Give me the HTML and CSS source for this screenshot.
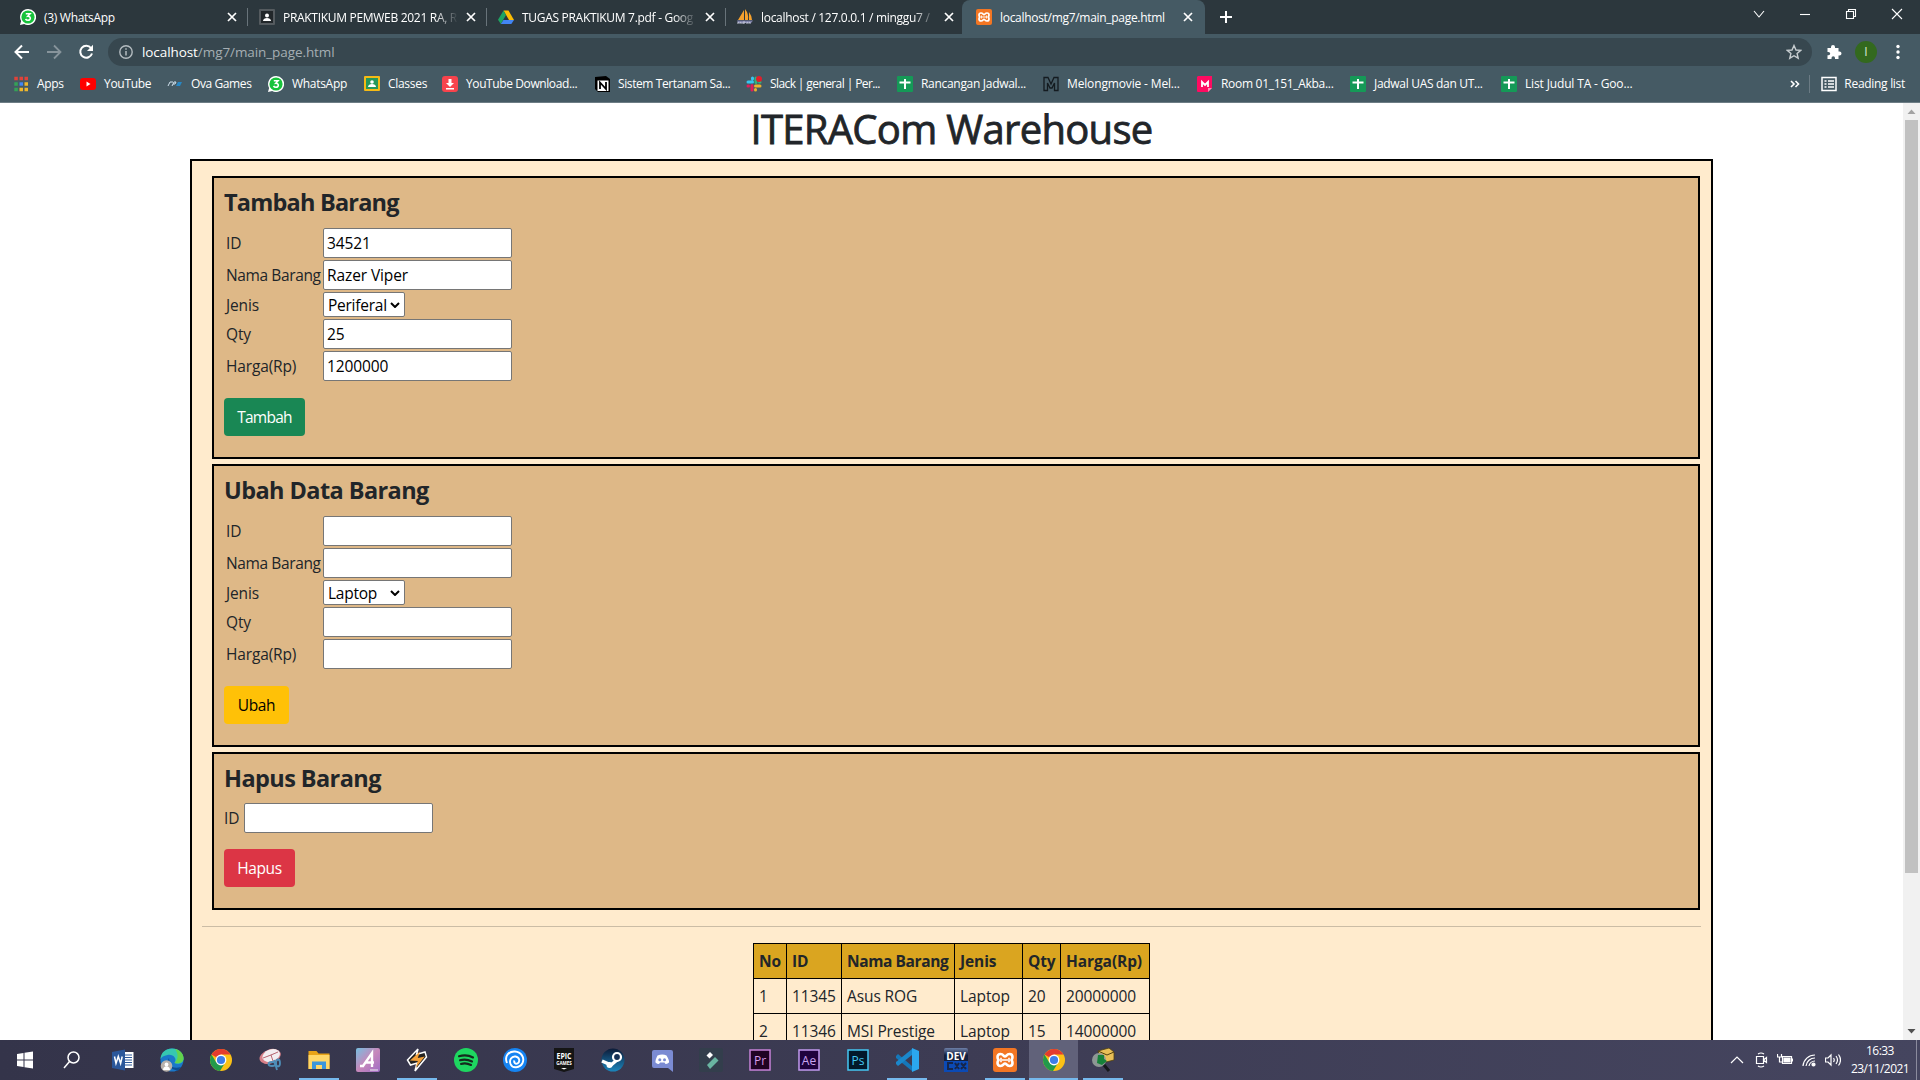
FILE: index.html
```html
<!DOCTYPE html>
<html lang="id">
<head>
<meta charset="utf-8">
<title>ITERACom Warehouse</title>
<link rel="stylesheet" href="styles.css">
</head>
<body>
<svg class="defs" width="0" height="0" aria-hidden="true">
  <symbol id="close" viewBox="0 0 10 10"><path d="M1 1l8 8M9 1l-8 8" stroke="#fff" stroke-width="1.7" fill="none"/></symbol>
  <symbol id="wa" viewBox="0 0 16 16"><path d="M8 0a8 8 0 1 1-3.800 15L0 16l1.100-4A8 8 0 0 1 8 0z" fill="#fff"/><circle cx="8" cy="8" r="6.600" fill="#18c33c"/><path d="M5.800 4.800h4.200L7.800 7.300c3.300-.300 3.300 4 .200 4-1.200 0-2-.500-2.500-1.300" fill="none" stroke="#fff" stroke-width="1.600"/></symbol>
  <symbol id="xampp" viewBox="0 0 24 24"><rect width="24" height="24" rx="3" fill="#f37623"/><path d="M7.500 6c3 0 3 2.500 4.500 2.500S13.500 6 16.500 6c2 0 3 1.500 3 3s-1 3-1 3 1 1.500 1 3-1 3-3 3c-3 0-3-2.500-4.500-2.500S10.500 18 7.500 18c-2 0-3-1.500-3-3s1-3 1-3-1-1.500-1-3 1-3 3-3z" fill="none" stroke="#fff" stroke-width="2.600"/><path d="M8 9.800v4.400M16 9.800v4.400M9 12h6" stroke="#fff" stroke-width="1.600"/></symbol>
  <symbol id="sheet" viewBox="0 0 16 16"><rect width="16" height="16" rx="1" fill="#159957"/><path d="M2.500 6.500h11M8 3v10" stroke="#fff" stroke-width="2"/></symbol>
  <symbol id="chrome" viewBox="0 0 24 24"><circle cx="12" cy="12" r="11" fill="#fbc116"/><path d="M12 12L2.500 6.500A11 11 0 0 1 21.500 6.500H12z" fill="#e33b2e"/><path d="M2.500 6.500A11 11 0 0 0 11 23l5.500-9L12 12 7 14z" fill="#229a4b"/><circle cx="12" cy="12" r="5.400" fill="#fff"/><circle cx="12" cy="12" r="4.100" fill="#3d7de8"/></symbol>
</svg>

<header class="tabs">
  <div class="tab"><svg class="fav" viewBox="0 0 16 16"><use href="#wa"/></svg><span class="tab-title">(3) WhatsApp</span><svg class="x"><use href="#close"/></svg></div>
  <div class="tab"><svg class="fav" viewBox="0 0 16 16"><rect width="16" height="16" rx="1" fill="#555b5f"/><rect x="2" y="2" width="12" height="12" fill="#22272a"/><circle cx="8" cy="6.500" r="2" fill="#fff"/><path d="M4 12c0-4 8-4 8 0z" fill="#fff"/></svg><span class="tab-title fade">PRAKTIKUM PEMWEB 2021 RA, R</span><svg class="x"><use href="#close"/></svg></div>
  <div class="tab"><svg class="fav" viewBox="0 0 16 16"><path d="M5.500 1.500h5L16 11h-5z" fill="#fbbc04"/><path d="M5.500 1.500L8 6 2.800 15 0 10.800z" fill="#1ea362"/><path d="M5.400 11H16l-2.700 4H2.800z" fill="#4285f4"/></svg><span class="tab-title fade">TUGAS PRAKTIKUM 7.pdf - Goog</span><svg class="x"><use href="#close"/></svg></div>
  <div class="tab"><svg class="fav" viewBox="0 0 16 16"><path d="M7 1L1 11h6zM8 0q4 5 3 11H8zM12 3q3 4 3 8h-3z" fill="#f6a12d"/><path d="M0 11.500h16L14 14H1z" fill="#7d80a8"/><path d="M1 15v-2l1.500 1L4 13v2m2 0v-2h2v1H6m4 1v-2l1.500 1 1.500-1v2" stroke="#bfc2d6" fill="none"/></svg><span class="tab-title fade">localhost / 127.0.0.1 / minggu7 /</span><svg class="x"><use href="#close"/></svg></div>
  <div class="tab active"><svg class="fav" viewBox="0 0 24 24"><use href="#xampp"/></svg><span class="tab-title">localhost/mg7/main_page.html</span><svg class="x"><use href="#close"/></svg></div>
  <svg class="plus" viewBox="0 0 12 12"><path d="M6 0v12M0 6h12" stroke="#fff" stroke-width="2"/></svg>
  <div class="window-controls">
    <svg viewBox="0 0 12 12"><path d="M1 3l5 6 5-6" /></svg>
    <svg viewBox="0 0 12 12"><path d="M1 6.500h10"/></svg>
    <svg viewBox="0 0 12 12"><path d="M1.500 3.500h7v7h-7zM3.500 3.500v-2h7v7h-2"/></svg>
    <svg viewBox="0 0 12 12"><path d="M1 1l10 10M11 1L1 11"/></svg>
  </div>
</header>

<nav class="toolbar">
  <svg class="nav" viewBox="0 0 16 16"><path d="M15 8H2M8 1.500L1.500 8 8 14.500" stroke="#fff" stroke-width="2" fill="none"/></svg>
  <svg class="nav" viewBox="0 0 16 16"><path d="M1 8h13M8 1.500L14.500 8 8 14.500" stroke="#87949b" stroke-width="1.800" fill="none"/></svg>
  <svg class="nav" viewBox="0 0 16 16"><path d="M13 4A6 6 0 1 0 14 9.500" stroke="#fff" stroke-width="2" fill="none"/><path d="M15 .800V7H9z" fill="#fff"/></svg>
  <div class="address">
    <svg width="14" height="14" viewBox="0 0 14 14"><circle cx="7" cy="7" r="6.200" stroke="#b4bcc0" stroke-width="1.400" fill="none"/><path d="M7 6v4.500M7 3.300v1.500" stroke="#b4bcc0" stroke-width="1.500"/></svg>
    <span class="url"><b>localhost</b>/mg7/main_page.html</span>
    <svg width="16" height="16" viewBox="0 0 16 16"><path d="M8 1.500l2 4.500 4.700.400-3.600 3.100 1.100 4.700L8 11.700l-4.200 2.500 1.100-4.700L1.300 6.400 6 6z" stroke="#c6cccf" stroke-width="1.400" fill="none"/></svg>
  </div>
  <svg class="ext" viewBox="0 0 16 16"><path d="M1.500 4H5V3a2 2 0 0 1 4 0v1h3.500v3.500h1a2 2 0 0 1 0 4h-1V15H9v-1a1.700 1.700 0 0 0-3.500 0v1h-4v-3.700h1a1.700 1.700 0 0 0 0-3.400h-1z" fill="#fff"/></svg>
  <div class="avatar">I</div>
  <svg class="dots" viewBox="0 0 4 16"><circle cx="2" cy="2.500" r="1.700"/><circle cx="2" cy="8" r="1.700"/><circle cx="2" cy="13.500" r="1.700"/></svg>
</nav>

<div class="bookmarks">
  <div class="bm w67"><svg viewBox="0 0 16 16"><path d="M1.300 2.500h3.500M6.500 2.500H10M11.500 2.500H15" stroke="#e0433a" stroke-width="3.400"/><path d="M1.300 8h3.500M1.300 13.500h3.500" stroke="#35a257" stroke-width="3.400"/><path d="M6.500 8H10" stroke="#4286f5" stroke-width="3.400"/><path d="M11.500 8H15M6.500 13.500H10M11.500 13.500H15" stroke="#eeb72c" stroke-width="3.400"/></svg><span>Apps</span></div>
  <div class="bm w87"><svg viewBox="0 0 16 16"><rect y="2" width="16" height="12" rx="3" fill="#f00"/><path d="M6.500 5.500v5l4-2.500z" fill="#fff"/></svg><span>YouTube</span></div>
  <div class="bm w101"><svg viewBox="0 0 16 16"><path d="M1 10l2-4h3M5 10l2-4h2l-1 2H6" stroke="#cfe0ec" fill="none"/><path d="M9 10l2-4h4l-2 4z" fill="#2787c4"/></svg><span class="tight">Ova Games</span></div>
  <div class="bm w96"><svg viewBox="0 0 16 16"><use href="#wa"/></svg><span>WhatsApp</span></div>
  <div class="bm w78"><svg viewBox="0 0 16 16"><rect width="16" height="15" rx="1" fill="#f5ba15"/><rect x="2" y="2" width="12" height="11" fill="#26985a"/><circle cx="8" cy="6" r="1.800" fill="#fff"/><path d="M4 11c0-4 8-4 8 0z" fill="#fff"/></svg><span>Classes</span></div>
  <div class="bm w152"><svg viewBox="0 0 16 16"><rect width="16" height="16" rx="3" fill="#f7434c"/><path d="M6.500 3h3v4H12l-4 4-4-4h2.500zM4 12h8v1.500H4z" fill="#fff"/></svg><span class="tight">YouTube Download...</span></div>
  <div class="bm w152"><svg viewBox="0 0 16 16"><path d="M1 1l11-1 4 3v13H4l-3-3z" fill="#000"/><path d="M3.500 4.500H14.500V15H3.500z" fill="#fff"/><path d="M6 13V6.500l6 6.500V6" stroke="#000" stroke-width="1.800" fill="none"/></svg><span class="tight">Sistem Tertanam Sa...</span></div>
  <div class="bm w151"><svg viewBox="0 0 16 16"><g stroke-width="3" stroke-linecap="round"><path d="M2 6h4.500M6.500 2v1" stroke="#36c5f0"/><path d="M10 2v4.500M14 6h-.500" stroke="#2eb67d"/><path d="M14 10H9.500M9.500 14v-.500" stroke="#ecb22e"/><path d="M6 14V9.500M2 10h.500" stroke="#e01e5a"/></g><circle cx="13" cy="3" r="3" fill="#e01f2d"/></svg><span class="tighter">Slack | general | Per...</span></div>
  <div class="bm w146"><svg viewBox="0 0 16 16"><use href="#sheet"/></svg><span>Rancangan Jadwal...</span></div>
  <div class="bm w154"><svg viewBox="0 0 16 16"><path d="M1 1.500h4L8 8l3-6.500h4v13h-3.500V7L9 12H7L4.500 7v7.500H1z" fill="none" stroke="#141b20" stroke-width="1.300"/></svg><span class="loose">Melongmovie - Mel...</span></div>
  <div class="bm w153"><svg viewBox="0 0 16 16"><path d="M1 0h14v12l-4 4H1a1 1 0 0 1-1-1V1z" fill="#ff0b61"/><path d="M5 11V6l3 3 3-3v5" stroke="#fff" stroke-width="1.800" fill="none"/><path d="M11 16v-4h4z" fill="#ff8cb4"/></svg><span>Room 01_151_Akba...</span></div>
  <div class="bm w151"><svg viewBox="0 0 16 16"><use href="#sheet"/></svg><span>Jadwal UAS dan UT...</span></div>
  <div class="bm"><svg viewBox="0 0 16 16"><use href="#sheet"/></svg><span class="loose">List Judul TA - Goo...</span></div>
  <svg class="more" viewBox="0 0 10 8"><path d="M1 1l3 3-3 3M5.500 1l3 3-3 3" stroke="#fff" stroke-width="1.600" fill="none"/></svg>
  <div class="reading"><svg viewBox="0 0 16 16"><path d="M1 1.500h14v13H1zM3.500 5h2M7 5h6M3.500 8h2M7 8h6M3.500 11h2M7 11h6" stroke="#fff" stroke-width="1.500" fill="none"/></svg><span>Reading list</span></div>
</div>

<div class="viewport">
  <main class="page">
    <h1>ITERACom Warehouse</h1>
    <div class="container">
      <section class="box">
        <h4>Tambah Barang</h4>
        <div class="form">
          <label>ID</label><input value="34521">
          <label class="long">Nama Barang</label><input value="Razer Viper">
          <label>Jenis</label><div class="select">Periferal<svg viewBox="0 0 10 6"><path d="M1 1l4 4 4-4"/></svg></div>
          <label>Qty</label><input value="25">
          <label>Harga(Rp)</label><input value="1200000">
        </div>
        <button class="btn green">Tambah</button>
      </section>
      <section class="box">
        <h4 class="wide">Ubah Data Barang</h4>
        <div class="form">
          <label>ID</label><input>
          <label class="long">Nama Barang</label><input>
          <label>Jenis</label><div class="select">Laptop<svg viewBox="0 0 10 6"><path d="M1 1l4 4 4-4"/></svg></div>
          <label>Qty</label><input>
          <label>Harga(Rp)</label><input>
        </div>
        <button class="btn yellow">Ubah</button>
      </section>
      <section class="box short">
        <h4 class="wide">Hapus Barang</h4>
        <div class="inline"><label>ID</label><input></div>
        <button class="btn red">Hapus</button>
      </section>
      <hr>
      <table>
        <colgroup><col class="c1"><col class="c2"><col class="c3"><col class="c4"><col class="c5"><col class="c6"></colgroup>
        <tr><th>No</th><th>ID</th><th>Nama Barang</th><th>Jenis</th><th>Qty</th><th>Harga(Rp)</th></tr>
        <tr><td>1</td><td>11345</td><td>Asus ROG</td><td>Laptop</td><td>20</td><td>20000000</td></tr>
        <tr><td>2</td><td>11346</td><td>MSI Prestige</td><td>Laptop</td><td>15</td><td>14000000</td></tr>
      </table>
    </div>
  </main>
  <div class="scrollbar">
    <svg viewBox="0 0 17 17"><path d="M4.500 11l4-4.500 4 4.500z" fill="#a3a3a3"/></svg>
    <div class="thumb"></div>
    <svg class="down" viewBox="0 0 17 17"><path d="M4.500 6l4 4.500 4-4.500z" fill="#505050"/></svg>
  </div>
</div>

<footer class="taskbar">
  <div class="app"><svg viewBox="0 0 24 24"><path d="M4 6l6.500-1v6.500H4zM11.500 4.800L20 3.600v7.900h-8.500zM4 12.500h6.500V19L4 18zM11.500 12.500H20v7.900l-8.500-1.200z" fill="#fff"/></svg></div>
  <div class="app search"><svg viewBox="0 0 24 24"><circle cx="13.500" cy="9.500" r="5.500" fill="none" stroke="#fff" stroke-width="1.500"/><path d="M9.500 13.500L4 20" stroke="#fff" stroke-width="1.500"/></svg></div>
  <div class="app"><svg viewBox="0 0 24 24"><path d="M12 4h10.500v16H12z" fill="#fff"/><path d="M14 7h7m-7 2.500h7M14 12h7m-7 2.500h7M14 17h7" stroke="#2b579a"/><path d="M1 4l13-2.500v21L1 20z" fill="#2b579a"/><path d="M3.500 8.500l1.500 7 2.300-7 2.300 7 1.600-7" stroke="#fff" stroke-width="1.500" fill="none"/></svg></div>
  <div class="app"><svg viewBox="0 0 24 24"><circle cx="12" cy="12" r="11.500" fill="#1a77c9"/><path d="M.500 11C1 4 6 .500 12 .500c7 0 12 5 11.500 10.500-.500 5-6 5.500-9 4 3-4-1-9-7-8-4 .700-6 2-7 4z" fill="#36c7b0"/><path d="M15 1c5 1 9 5 8.500 10-.500 4-5 5-9 4 4-4 4-9 .500-14z" fill="#63d34c"/><path d="M9 10c-3 5 2 12 12 9l-3 4-8-3z" fill="#0d4c91"/><circle cx="6.500" cy="18" r="5.800" fill="#b8b2ad"/><circle cx="6.500" cy="16.500" r="1.900" fill="#fff"/><path d="M3 22c0-5 7-5 7 0z" fill="#fff"/></svg></div>
  <div class="app"><svg viewBox="0 0 24 24"><use href="#chrome"/></svg></div>
  <div class="app"><svg viewBox="0 0 24 24"><ellipse cx="12" cy="8.500" rx="11" ry="7" fill="#d88088" transform="rotate(-20 12 8)"/><ellipse cx="13" cy="7.500" rx="9" ry="6" fill="#f2eef0" transform="rotate(-20 13 7)"/><path d="M5 10l8-3 7-3M13 7l2 6" stroke="#bb6974"/><ellipse cx="14" cy="16" rx="3.500" ry="2" fill="none" stroke="#4e8fb9" stroke-width="1.800"/><ellipse cx="20" cy="15" rx="2" ry="3.500" fill="none" stroke="#4e8fb9" stroke-width="1.800"/><path d="M16 12l3 10" stroke="#4e8fb9" stroke-width="1.800"/></svg></div>
  <div class="app open"><svg viewBox="0 0 24 24"><path d="M1.500 3h8l2 2.500h11V21h-21z" fill="#e8a317"/><path d="M1.500 7h21v14h-21z" fill="#ffd768"/><path d="M5 21v-7.500h14V21h-4v-4H9v4z" fill="#3b96db"/></svg></div>
  <div class="app"><svg viewBox="0 0 24 24"><defs><linearGradient id="ag" x2="1" y2="1"><stop stop-color="#76bfe0"/><stop offset=".5" stop-color="#c788bb"/><stop offset="1" stop-color="#9f6dc5"/></linearGradient></defs><rect width="24" height="24" rx="2" fill="url(#ag)"/><path d="M4 18h4M7 18L16 5v14M9 14.500h9" stroke="#fff" stroke-width="2.400" fill="none"/><path d="M14 22h8" stroke="#eee"/></svg></div>
  <div class="app open"><svg viewBox="0 0 24 24"><path d="M2.500 12L13 1l-1.500 5.500L20 4l1.500 5L10 23l2-8-6.500 2z" fill="#222" stroke="#fff" stroke-width="1.500"/><path d="M5 12.500l10-9-2.200 6.500 7-1.500L10.500 20l2.300-7z" fill="#f3a03a"/></svg></div>
  <div class="app"><svg viewBox="0 0 24 24"><circle cx="12" cy="12" r="12" fill="#1ed760"/><path d="M5 8.300c5-1.500 10-1 14 1.200M6 12.300c4-1.200 8-.800 12 1.200M7 16c3-1 7-.600 10 1" stroke="#152a1d" stroke-width="2.100" stroke-linecap="round" fill="none"/></svg></div>
  <div class="app"><svg viewBox="0 0 24 24"><circle cx="12" cy="12" r="12" fill="#1684f2"/><path d="M4 15C1 8 6 3 12 3.500c6 .500 10 6 7.500 11.500-2.500 5-10 6-12 1-1.500-4 1-8 5-7.500 4 .500 5 5 2 7-2 1-4-1-3-3" fill="none" stroke="#fff" stroke-width="1.900"/></svg></div>
  <div class="app"><svg viewBox="0 0 24 24"><path d="M2 0h20v21l-10 3-10-3z" fill="#151515"/><text x="12" y="11" text-anchor="middle" font-size="9.500" font-weight="700" fill="#fff" textLength="15" lengthAdjust="spacingAndGlyphs">EPIC</text><text x="12" y="17" text-anchor="middle" font-size="4.500" font-weight="700" fill="#fff">GAMES</text><path d="M9 20h6l-3 1.500z" fill="#fff"/></svg></div>
  <div class="app"><svg viewBox="0 0 24 24"><defs><linearGradient id="sg" x2="0" y2="1"><stop stop-color="#0d1b38"/><stop offset="1" stop-color="#1b86bd"/></linearGradient></defs><circle cx="12" cy="12" r="11.500" fill="url(#sg)"/><path d="M1 13L10 17l6-5" stroke="#fff" stroke-width="3.500" fill="none"/><circle cx="16" cy="9" r="4" fill="#153055" stroke="#fff" stroke-width="2.200"/><circle cx="8.500" cy="17" r="3" fill="#fff"/></svg></div>
  <div class="app"><svg viewBox="0 0 24 24"><path d="M4 2h17a2 2 0 0 1 2 2v20l-5-4H4a2 2 0 0 1-2-2V4a2 2 0 0 1 2-2z" fill="#7b8bd3"/><path d="M7.500 7.500q5-2 9 0 3 5 2.500 7-2 1.500-3.500 1.500l-1-1.500H10L9 16q-2 0-3.500-1.500-.500-2 2-7z" fill="#fff"/><circle cx="9.800" cy="11.800" r="1.500" fill="#7b8bd3"/><circle cx="14.500" cy="11.800" r="1.500" fill="#7b8bd3"/></svg></div>
  <div class="app"><svg viewBox="0 0 24 24"><rect width="24" height="24" rx="2" fill="#333e4c"/><path d="M11 4l3 3-3.500 3.500-3-3z" fill="#fff"/><path d="M16 9l3.500 3.500L11 21l-3-4z" fill="#69b5a1"/></svg></div>
  <div class="app"><svg viewBox="0 0 24 24"><rect x="2" y="2" width="20" height="20" fill="#210323" stroke="#c782d9" stroke-width="1.500"/><text x="12" y="16.500" text-anchor="middle" font-size="12" fill="#d49be8">Pr</text></svg></div>
  <div class="app"><svg viewBox="0 0 24 24"><rect x="2" y="2" width="20" height="20" fill="#1f023d" stroke="#c29af0" stroke-width="1.500"/><text x="12" y="16.500" text-anchor="middle" font-size="12" fill="#c8a4f0">Ae</text></svg></div>
  <div class="app"><svg viewBox="0 0 24 24"><rect x="2" y="2" width="20" height="20" fill="#02182a" stroke="#44c7f4" stroke-width="1.500"/><text x="12" y="16.500" text-anchor="middle" font-size="12" fill="#45c7f1">Ps</text></svg></div>
  <div class="app open"><svg viewBox="0 0 24 24"><path d="M1 8l2-2 14 12v5L1 10z" fill="#1577b9"/><path d="M1 16l2 2L17 7V1L1 14z" fill="#1b87cb"/><path d="M17 0l7 3v18l-7 3z" fill="#2ba7ef"/></svg></div>
  <div class="app"><svg viewBox="0 0 24 24"><defs><linearGradient id="dg" x2="0" y2="1"><stop stop-color="#6d7fa8"/><stop offset=".3" stop-color="#13213f"/></linearGradient></defs><rect width="24" height="24" rx="2" fill="url(#dg)"/><rect y="13" width="24" height="11" fill="#0b4ab5"/><text x="12" y="11.500" text-anchor="middle" font-size="10" font-weight="700" fill="#fff">DEV</text><path d="M9 15H4v6h5M11 15l4 6m0-6l-4 6M17 15l5 6m0-6l-5 6" stroke="#16264b" stroke-width="2" fill="none"/></svg></div>
  <div class="app open"><svg viewBox="0 0 24 24"><use href="#xampp"/></svg></div>
  <div class="app current"><svg viewBox="0 0 24 24"><use href="#chrome"/></svg></div>
  <div class="app open"><svg viewBox="0 0 24 24"><path d="M7 3l11-3 5 4v8l-12 3z" fill="#e8bf57" stroke="#51400f" stroke-width=".8"/><path d="M7 3l9 4 7-3" stroke="#51400f" fill="none"/><circle cx="8" cy="12" r="7" fill="#8d9794"/><path d="M7 7h6v4l3 2-5 4-5-2z" fill="#168239"/><path d="M13 17l5 6" stroke="#16181c" stroke-width="3"/></svg></div>
  <div class="tray">
    <svg viewBox="0 0 16 16"><path d="M2 11l6-6 6 6"/></svg>
    <svg viewBox="0 0 16 16"><path d="M3.500 4.500h7v7h-7zM10.500 8l3-2.500v5zM5 2q3-2 6 0M5 14q3 2 6 0"/></svg>
    <svg viewBox="0 0 16 16"><path d="M5.500 4.500h9v7h-9zM.500 2v3h4V2M2.500 5v5H5"/><path d="M7 6h6v4H7z" fill="#fff"/><path d="M15.500 6.500v3"/></svg>
    <svg viewBox="0 0 16 16"><path d="M2 14A12 12 0 0 1 14 3M5 14a9 9 0 0 1 9-8M8 14a6 6 0 0 1 6-5"/><circle cx="12.500" cy="12.500" r="1.500" fill="#fff"/></svg>
    <svg viewBox="0 0 16 16"><path d="M.500 6v4h2.500l3 3V3L3 6zM8.500 6q1.500 2 0 4M11 4q3 4 0 8M13.500 2.500q4 5.500 0 11"/></svg>
  </div>
  <div class="clock"><span>16:33</span><span class="date">23/11/2021</span></div>
  <div class="peek"></div>
</footer>
</body>
</html>
```
FILE: styles.css
```css
* { box-sizing: border-box; }
body {
  margin: 0; width: 1920px; height: 1080px; overflow: hidden;
  display: flex; flex-direction: column;
  font-family: "Open Sans", "Noto Sans", sans-serif; font-size: 15.5px; color: #212529; background: #fff;
}
svg { flex: none; display: block; }
.defs { position: absolute; }

/* tab strip */
.tabs { height: 34px; flex: none; display: flex; align-items: center; background: #2c373d; padding-left: 10px; color: #fff; font-size: 12px; }
.tab { width: 239px; height: 34px; display: flex; align-items: center; padding: 0 11px 0 10px; border-right: 1px solid transparent; background: linear-gradient(#68737a, #68737a) right 8px / 1px 18px no-repeat; }
.tab:nth-child(4) { background: none; }
.tab.active { background: #455a64; border-radius: 8px 8px 0 0; margin: 0 0 0 -4px; width: 243px; padding-left: 14px; padding-right: 11px; }
.fav { width: 16px; height: 16px; margin-right: 8px; }
.tab-title { flex: 1; min-width: 0; white-space: nowrap; overflow: hidden; letter-spacing: -.3px; }
.fade { -webkit-mask-image: linear-gradient(90deg, #000 152px, transparent 175px); mask-image: linear-gradient(90deg, #000 152px, transparent 175px); }
.x { width: 10px; height: 10px; margin-left: 3px; }
.plus { width: 12px; height: 12px; margin-left: 15px; }
.window-controls { margin-left: auto; height: 28px; display: flex; align-items: center; gap: 34px; padding-right: 17px; align-self: flex-start; }
.window-controls svg { width: 12px; height: 12px; fill: none; stroke: #fff; stroke-width: 1.100; }

/* toolbar */
.toolbar { height: 35px; flex: none; background: #455a64; display: flex; align-items: center; padding-left: 14px; }
.nav { width: 16px; height: 16px; margin-right: 16px; }
.address { height: 28px; width: 1704px; border-radius: 14px; background: #37474f; display: flex; align-items: center; padding: 0 10px 0 11px; margin-left: -2px; }
.url { margin-left: 9px; flex: 1; font-size: 13.5px; color: #a5aeb3; letter-spacing: -.08px; }
.url b { font-weight: 400; color: #fff; }
.ext { width: 16px; height: 16px; margin-left: 14px; }
.avatar { width: 22px; height: 22px; border-radius: 50%; background: #33691e; color: #dfe8da; font-size: 12px; line-height: 22px; text-align: center; margin-left: 13px; }
.dots { width: 4px; height: 16px; margin-left: 19px; fill: #fff; }

/* bookmarks */
.bookmarks { height: 34px; flex: none; background: #455a64; border-bottom: 1px solid #6d7d85; display: flex; align-items: center; padding: 0 15px 4px 13px; color: #fff; font-size: 12px; letter-spacing: -.3px; }
.bm { display: flex; align-items: center; white-space: nowrap; flex: none; }
.bm svg { width: 16px; height: 16px; margin-right: 8px; }
.tight { letter-spacing: -.4px; }
.tighter { letter-spacing: -.6px; }
.loose { letter-spacing: -.15px; }
.w67 { width: 67px; } .w78 { width: 78px; } .w87 { width: 87px; } .w96 { width: 96px; } .w101 { width: 101px; }
.w146 { width: 146px; } .w151 { width: 151px; } .w152 { width: 152px; } .w153 { width: 153px; } .w154 { width: 154px; }
.more { width: 10px; height: 8px; margin-left: auto; }
.reading { display: flex; align-items: center; height: 18px; border-left: 1px solid #6b7b84; margin-left: 9px; padding-left: 11px; white-space: nowrap; }
.reading svg { width: 16px; height: 16px; margin-right: 7px; }

/* page */
.viewport { height: 937px; flex: none; display: flex; overflow: hidden; }
.page { width: 1903px; padding-top: 2px; }
h1 { margin: 0 0 6px; height: 48px; line-height: 48px; font-size: 40px; font-weight: 500; letter-spacing: -.7px; text-align: center; -webkit-text-stroke: .8px #212529; }
.container { width: 1523px; height: 1000px; margin: 0 auto; border: 2px solid #000; background: #ffebcd; padding: 15px 10px; }
.box { height: 283px; border: 2px solid #000; background: #deb887; margin: 0 1px 5px 10px; padding: 10px; }
.box.short { height: 158px; margin-bottom: 0; }
h4 { margin: 0 0 8px; height: 28px; line-height: 28px; font-size: 23.5px; font-weight: 700; letter-spacing: -.8px; }
h4.wide { letter-spacing: -.58px; }
.form { display: grid; grid-template-columns: 96px 189px; column-gap: 1px; row-gap: 2px; padding: 4px 0 0 2px; align-items: center; }
input { width: 189px; height: 30px; border: 1px solid #767676; border-radius: 2px; padding: 1px 3px; font: inherit; letter-spacing: -.1px; color: #000; background: #fff; outline: none; }
label { white-space: nowrap; letter-spacing: -.15px; }
.long { letter-spacing: -.38px; }
.select { width: 82px; height: 25px; background: #fff; border: 1px solid #767676; border-radius: 2px; color: #000; display: flex; align-items: center; justify-content: space-between; padding: 0 4px; letter-spacing: -.25px; }
.select svg { width: 10px; height: 6px; fill: none; stroke: #000; stroke-width: 2; }
.inline { display: flex; align-items: center; gap: 5px; height: 30px; margin-top: 11px; }
.inline label { width: 15px; }
.btn { display: block; height: 38px; border: 0; border-radius: 4px; font: inherit; letter-spacing: -.4px; color: #fff; padding: 0; margin-top: 17px; }
.green { width: 81px; background: #198754; letter-spacing: -.75px; }
.yellow { width: 65px; background: #ffc107; color: #000; }
.red { width: 71px; background: #dc3545; margin-top: 16px; }
hr { margin: 16px 0; border: 0; height: 1px; background: #cbbca5; }
table { width: 397px; margin: 0 auto; border-collapse: collapse; table-layout: fixed; }
th, td { border: 1px solid #000; height: 35px; padding: 0 5px; text-align: left; white-space: nowrap; letter-spacing: -.1px; }
th { background: #daa520; font-weight: 700; }
th:nth-child(3) { letter-spacing: -.4px; }
.c1 { width: 33px; } .c2 { width: 55px; } .c3 { width: 113px; } .c4 { width: 68px; } .c5 { width: 38px; } .c6 { width: 89px; }

.scrollbar { width: 17px; background: #f1f1f1; display: flex; flex-direction: column; align-items: center; }
.scrollbar svg { width: 17px; height: 17px; }
.thumb { width: 13px; height: 753px; background: #c1c1c1; }
.down { margin-top: auto; }

/* taskbar */
.taskbar { height: 40px; flex: none; display: flex; background: linear-gradient(90deg, #34344a, #3d3c54 50%, #45455f); color: #fff; }
.app { width: 49px; height: 40px; display: flex; align-items: center; justify-content: center; }
.app svg { width: 24px; height: 24px; }
.search { padding-right: 3px; }
.open { background: linear-gradient(#76b9ed, #76b9ed) center bottom / 40px 2px no-repeat; }
.current { background: linear-gradient(#76b9ed, #76b9ed) bottom / 100% 2px no-repeat #61627a; }
.tray { margin-left: auto; display: flex; align-items: center; gap: 8px; }
.tray svg { width: 16px; height: 16px; fill: none; stroke: #fff; stroke-width: 1.200; }
.clock { width: 75px; padding-left: 3px; display: flex; flex-direction: column; align-items: center; justify-content: center; font-size: 12px; line-height: 18px; letter-spacing: -.55px; }
.peek { width: 4px; border-left: 1px solid #8b8b9d; }
```
